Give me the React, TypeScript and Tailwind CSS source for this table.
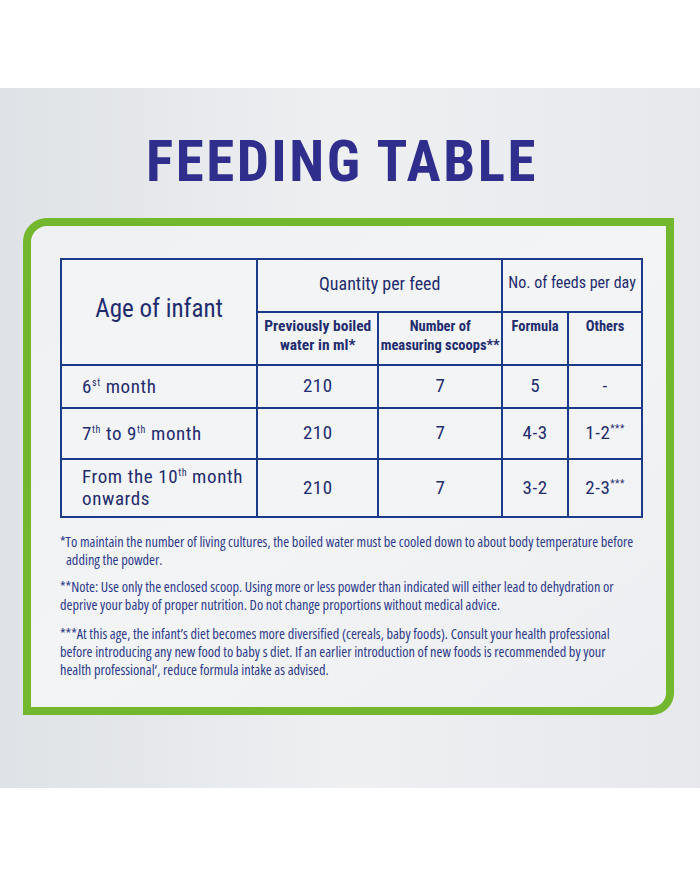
import React from "react";

const Sup = ({ children }: { children: React.ReactNode }) => (
  <span className="relative -top-[7px] text-[10px] leading-none">{children}</span>
);

const rows = [
  { h: "h-[43px]", age: <>6<Sup>st</Sup> month</>, water: "210", scoops: "7", formula: "5", others: "-" },
  { h: "h-[51px]", age: <>7<Sup>th</Sup> to 9<Sup>th</Sup> month</>, water: "210", scoops: "7", formula: "4-3", others: <>1-2<Sup>***</Sup></> },
  { h: "h-[58px]", age: <>From the 10<Sup>th</Sup> month<br />onwards</>, water: "210", scoops: "7", formula: "3-2", others: <>2-3<Sup>***</Sup></> },
];

export default function App() {
  const cell = "border-2 border-[#1c3a8a] text-center align-middle";
  return (
    <div className="w-[700px] h-[875px] bg-white flex flex-col font-['Roboto_Condensed','DejaVu_Sans_Condensed',sans-serif] text-[#1f2c6e]">
      <div className="h-[88px]" />
      <div className="h-[700px] flex flex-col bg-gradient-to-r from-[#dfe2e6] via-[#eef0f2] to-[#e6e8ec]">
        <h1 className="mt-[44px] h-[60px] text-center text-[57px] leading-[60px] font-bold tracking-[2.5px] text-[#2f2e8c] pr-[16px]">
          FEEDING TABLE
        </h1>

        {/* green frame */}
        <div className="mt-[26px] ml-[23px] mr-[26px] h-[497px] border-[8px] border-[#73b72e] rounded-tl-[24px] rounded-br-[22px] bg-gradient-to-br from-[#eef0f2] via-[#f3f4f6] to-[#eceef1] pl-[29px] pt-[32px]">
          <table className="border-collapse w-[583px] bg-[#f3f4f6]">
            <tbody>
              <tr className="h-[53px]">
                <td rowSpan={2} className={`${cell} w-[198px] text-[25px] pb-[6px]`}>Age of infant</td>
                <td colSpan={2} className={`${cell} text-[18px] pb-[4px]`}>Quantity per feed</td>
                <td colSpan={2} className={`${cell} text-[16px] whitespace-nowrap pb-[6px]`}>No. of feeds per day</td>
              </tr>
              <tr className="h-[53px] font-bold text-[14.5px] leading-[19px]">
                <td className={`${cell} w-[121px] whitespace-nowrap text-[15.5px] pb-[6px]`}>Previously boiled<br />water in ml*</td>
                <td className={`${cell} w-[124px] whitespace-nowrap pb-[6px]`}>Number of<br />measuring scoops**</td>
                <td className={`${cell} w-[66px] align-top pt-[4px]`}>Formula</td>
                <td className={`${cell} w-[74px] align-top pt-[4px]`}>Others</td>
              </tr>
              {rows.map((r, i) => (
                <tr key={i} className={r.h}>
                  <td className={`${cell} text-left pl-[20px] text-[19px] tracking-[0.6px] leading-[22px]`}>{r.age}</td>
                  <td className={`${cell} text-[19px] tracking-[0.5px]`}>{r.water}</td>
                  <td className={`${cell} text-[19px]`}>{r.scoops}</td>
                  <td className={`${cell} text-[19px] tracking-[0.5px]`}>{r.formula}</td>
                  <td className={`${cell} text-[19px] tracking-[0.5px]`}>{r.others}</td>
                </tr>
              ))}
            </tbody>
          </table>

          <div className="mt-[15px] text-[14.3px] leading-[18px] font-medium text-[#2d3a8a] whitespace-nowrap font-['Open_Sans',sans-serif] [font-stretch:75%]">
            <p>*To maintain the number of living cultures, the boiled water must be cooled down to about body temperature before</p>
            <p className="pl-[6px]">adding the powder.</p>
            <p className="mt-[9px]">**Note: Use only the enclosed scoop. Using more or less powder than indicated will either lead to dehydration or</p>
            <p>deprive your baby of proper nutrition. Do not change proportions without medical advice.</p>
            <p className="mt-[11px]">***At this age, the infant’s diet becomes more diversified (cereals, baby foods). Consult your health professional</p>
            <p>before introducing any new food to baby s diet. If an earlier introduction of new foods is recommended by your</p>
            <p>health professional‘, reduce formula intake as advised.</p>
          </div>
        </div>
      </div>
    </div>
  );
}
